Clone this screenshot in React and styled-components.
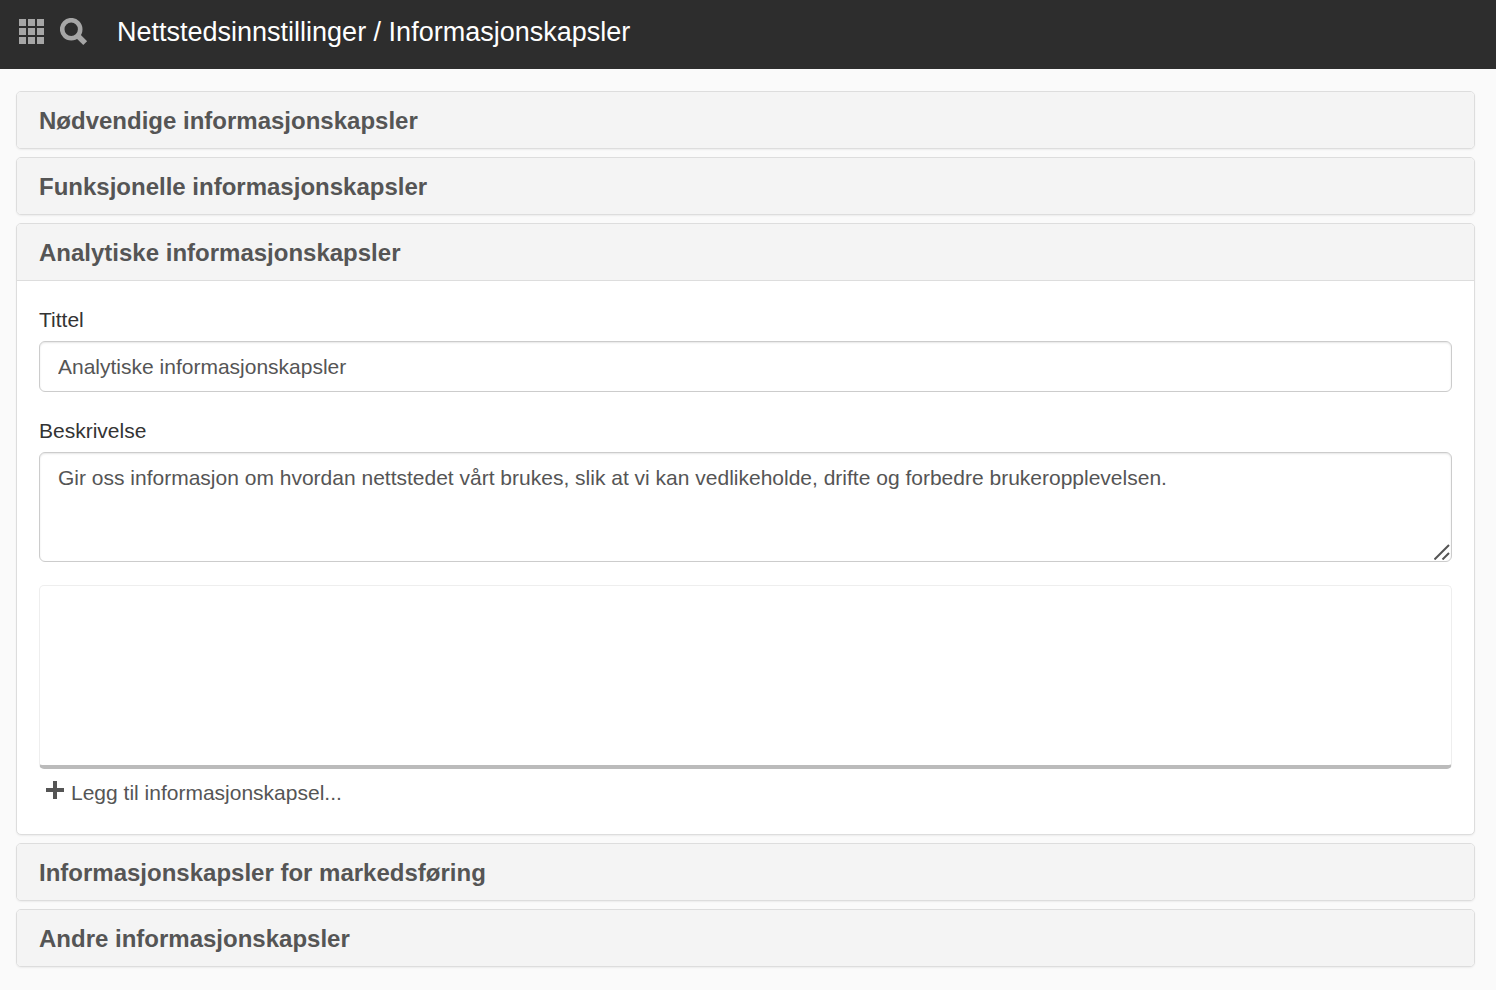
import { useState } from "react";
import styled, { createGlobalStyle } from "styled-components";

const sections = [
  { id: "necessary", title: "Nødvendige informasjonskapsler" },
  { id: "functional", title: "Funksjonelle informasjonskapsler" },
  {
    id: "analytics",
    title: "Analytiske informasjonskapsler",
    description:
      "Gir oss informasjon om hvordan nettstedet vårt brukes, slik at vi kan vedlikeholde, drifte og forbedre brukeropplevelsen.",
  },
  { id: "marketing", title: "Informasjonskapsler for markedsføring" },
  { id: "other", title: "Andre informasjonskapsler" },
];

function GridIcon() {
  const cells = [0, 9, 18];
  return (
    <svg width="25" height="26" viewBox="0 0 25 26" fill="currentColor" aria-hidden="true">
      {cells.map((y) =>
        cells.map((x) => <rect key={`${x}-${y}`} x={x} y={y} width="7" height="7" />)
      )}
    </svg>
  );
}

function SearchIcon() {
  return (
    <svg width="28" height="28" viewBox="0 0 28 28" fill="none" stroke="currentColor" aria-hidden="true">
      <circle cx="11.2" cy="11.2" r="9" strokeWidth="4.6" />
      <path d="M17 17L25.2 25.2" strokeWidth="5.4" />
    </svg>
  );
}

function PlusIcon() {
  return (
    <svg width="18" height="18" viewBox="0 0 18 18" fill="currentColor" aria-hidden="true">
      <path d="M7 0h4v7h7v4h-7v7h-4v-7h-7v-4h7z" />
    </svg>
  );
}

function CookieForm({ section }) {
  const [title, setTitle] = useState(section.title);
  const [description, setDescription] = useState(section.description || "");
  return (
    <PanelBody>
      <Label htmlFor={`${section.id}-title`}>Tittel</Label>
      <Input
        type="text"
        id={`${section.id}-title`}
        value={title}
        onChange={(e) => setTitle(e.target.value)}
      />
      <Label htmlFor={`${section.id}-description`}>Beskrivelse</Label>
      <TextAreaWrap>
        <TextArea
          id={`${section.id}-description`}
          value={description}
          onChange={(e) => setDescription(e.target.value)}
        />
        <Grip width="16" height="16" viewBox="0 0 16 16" aria-hidden="true">
          <path d="M0.5 15.5L15 1M8.5 15.5L15 9" />
        </Grip>
      </TextAreaWrap>
      <CookieList />
      <AddButton type="button">
        <PlusIcon />
        <span>Legg til informasjonskapsel...</span>
      </AddButton>
    </PanelBody>
  );
}

export default function App() {
  const [open, setOpen] = useState("analytics");
  return (
    <>
      <GlobalStyle />
      <TopBar>
        <IconButton type="button" aria-label="Meny">
          <GridIcon />
        </IconButton>
        <IconButton type="button" aria-label="Søk">
          <SearchIcon />
        </IconButton>
        <PageTitle>Nettstedsinnstillinger / Informasjonskapsler</PageTitle>
      </TopBar>
      <Panels>
        {sections.map((section) => {
          const isOpen = section.id === open;
          return (
            <Panel key={section.id}>
              <PanelHeading $open={isOpen}>
                <PanelToggle
                  type="button"
                  aria-expanded={isOpen}
                  onClick={() => setOpen(isOpen ? null : section.id)}
                >
                  {section.title}
                </PanelToggle>
              </PanelHeading>
              {isOpen && <CookieForm section={section} />}
            </Panel>
          );
        })}
      </Panels>
    </>
  );
}

const GlobalStyle = createGlobalStyle`
  * {
    box-sizing: border-box;
  }
  body {
    margin: 0;
    background-color: #fafafa;
    color: #333;
    font-family: "Liberation Sans", Arial, sans-serif;
    font-size: 21px;
    line-height: 30px;
  }
  button, input, textarea {
    font: inherit;
  }
`;

const TopBar = styled.header`
  display: flex;
  align-items: center;
  gap: 16px;
  padding: 14px 19px 19px;
  background-color: #2d2d2d;
`;

const IconButton = styled.button`
  display: flex;
  padding: 0;
  border: 0;
  background: none;
  color: #a6a6a6;
  cursor: pointer;
`;

const PageTitle = styled.h1`
  margin: 0 0 0 13px;
  color: white;
  font-size: 27px;
  font-weight: 400;
  line-height: 36px;
`;

const Panels = styled.main`
  display: flex;
  flex-direction: column;
  gap: 8px;
  padding: 22px 21px 22px 16px;
`;

const Panel = styled.section`
  overflow: hidden;
  border: 1px solid #ddd;
  border-radius: 5px;
  background-color: white;
  box-shadow: 0 1px 2px rgba(0, 0, 0, 0.06);
`;

const PanelHeading = styled.h2`
  margin: 0;
  font-size: 24px;
  font-weight: 700;
  border-bottom: ${(props) => (props.$open ? "1px solid #ddd" : "0")};
`;

const PanelToggle = styled.button`
  display: block;
  width: 100%;
  padding: 14px 22px 12px;
  border: 0;
  background-color: #f4f4f4;
  color: #555;
  text-align: left;
  cursor: pointer;
`;

const PanelBody = styled.div`
  padding: 24px 22px 26px;
`;

const Label = styled.label`
  display: block;
  margin-bottom: 6px;
`;

const Input = styled.input`
  display: block;
  width: 100%;
  margin-bottom: 24px;
  padding: 10px 18px 9px;
  border: 1px solid #ccc;
  border-radius: 6px;
  background-color: white;
  color: #555;
  box-shadow: inset 0 1px 2px rgba(0, 0, 0, 0.1);
`;

const TextAreaWrap = styled.div`
  position: relative;
  margin-bottom: 23px;
`;

const TextArea = styled.textarea`
  display: block;
  width: 100%;
  height: 110px;
  padding: 10px 18px;
  border: 1px solid #ccc;
  border-radius: 6px;
  background-color: white;
  color: #555;
  box-shadow: inset 0 1px 2px rgba(0, 0, 0, 0.1);
  resize: none;
`;

const Grip = styled.svg`
  position: absolute;
  right: 2px;
  bottom: 2px;
  stroke: #555;
  stroke-width: 2;
  pointer-events: none;
`;

const CookieList = styled.div`
  height: 184px;
  border: 1px solid #eee;
  border-bottom: 4px solid #bbb;
  border-radius: 5px;
`;

const AddButton = styled.button`
  display: flex;
  align-items: flex-start;
  gap: 7px;
  margin-top: 8px;
  padding: 4px 7px 0;
  border: 0;
  background: none;
  color: #555;
  line-height: 24px;
  cursor: pointer;

  span {
    padding: 0 0 3px;
  }
`;
